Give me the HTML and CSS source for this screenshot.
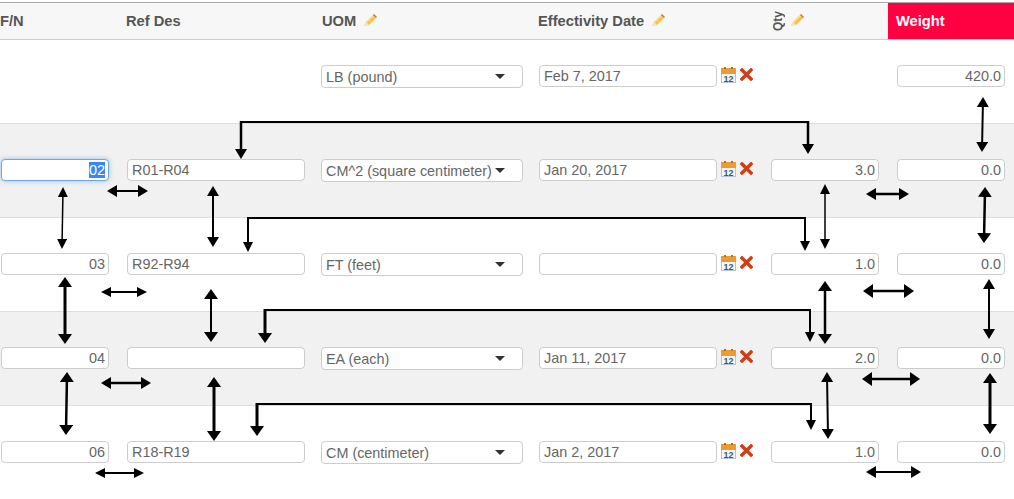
FILE: index.html
```html
<!DOCTYPE html>
<html lang="en">
<head>
    <meta charset="UTF-8">
    <title>Parts list</title>
    <link rel="stylesheet" href="styles.css">
</head>
<body>

    <svg width="0" height="0" class="defs">
        <defs>
            <g id="pencil">
                <path d="M1 12 L3 8 L10 1 L13 4 L6 11 Z" fill="#f5c242"/>
                <path d="M3 8 L10 1 L11 2 L4 9 Z" fill="#fbe08a"/>
                <path d="M10 1 L11 0 L14 3 L13 4 Z" fill="#c9702c"/>
                <path d="M1 12 L3 8 L6 11 Z" fill="#f6e6c4"/>
            </g>
            <g id="calendar">
                <rect x="0.5" y="2.5" width="14" height="13" fill="#f4f6f8" stroke="#b9c4ce"/>
                <rect x="0" y="1" width="15" height="6" fill="#ee9a2e"/>
                <rect x="3" y="0" width="2" height="2" fill="#a9712c"/>
                <rect x="10" y="0" width="2" height="2" fill="#a9712c"/>
                <text x="7.5" y="14.5" text-anchor="middle" class="cal-day">12</text>
            </g>
            <g id="cross">
                <path d="M2 2 L11 11 M11 2 L2 11" stroke="#cf3f17" stroke-width="3.4" stroke-linecap="square"/>
            </g>
            <marker id="head10" viewBox="0 0 10 10" refX="7" refY="5" markerWidth="10" markerHeight="10" markerUnits="userSpaceOnUse" orient="auto-start-reverse">
                <path d="M0 0 L10 5 L0 10 Z"/>
            </marker>
            <marker id="head12" viewBox="0 0 10 12" refX="7" refY="6" markerWidth="10" markerHeight="12" markerUnits="userSpaceOnUse" orient="auto-start-reverse">
                <path d="M0 0 L10 6 L0 12 Z"/>
            </marker>
            <marker id="head14" viewBox="0 0 10 14" refX="7" refY="7" markerWidth="10" markerHeight="14" markerUnits="userSpaceOnUse" orient="auto-start-reverse">
                <path d="M0 0 L10 7 L0 14 Z"/>
            </marker>
        </defs>
    </svg>

    <div class="head">
        <div class="head-cell first">F/N</div>
        <div class="head-cell ref">Ref Des</div>
        <div class="head-cell uom">UOM <svg class="pencil" width="14" height="13"><use href="#pencil"/></svg></div>
        <div class="head-cell eff">Effectivity Date <svg class="pencil" width="14" height="13"><use href="#pencil"/></svg></div>
        <div class="head-cell"><span class="qty">Qty</span> <svg class="pencil" width="14" height="13"><use href="#pencil"/></svg></div>
        <div class="head-cell weight">Weight</div>
    </div>

    <!-- first row has no F/N or Ref Des -->
    <div class="row top-row">
        <div></div>
        <div></div>
        <div class="select-wrap"><select class="field pick"><option>LB (pound)</option></select></div>
        <div class="date-cell">
            <input class="field date" value="Feb 7, 2017">
            <svg class="cal" width="15" height="16"><use href="#calendar"/></svg>
            <svg class="del" width="13" height="13"><use href="#cross"/></svg>
        </div>
        <div></div>
        <div><input class="field num" value="420.0"></div>
    </div>

    <div class="row alt">
        <div><div class="field num focused"><span class="sel">02</span></div></div>
        <div><input class="field date" value="R01-R04"></div>
        <div class="select-wrap"><select class="field pick"><option>CM^2 (square centimeter)</option></select></div>
        <div class="date-cell">
            <input class="field date" value="Jan 20, 2017">
            <svg class="cal" width="15" height="16"><use href="#calendar"/></svg>
            <svg class="del" width="13" height="13"><use href="#cross"/></svg>
        </div>
        <div><input class="field num" value="3.0"></div>
        <div><input class="field num" value="0.0"></div>
    </div>

    <div class="row">
        <div><input class="field num" value="03"></div>
        <div><input class="field date" value="R92-R94"></div>
        <div class="select-wrap"><select class="field pick"><option>FT (feet)</option></select></div>
        <div class="date-cell">
            <input class="field date" value="">
            <svg class="cal" width="15" height="16"><use href="#calendar"/></svg>
            <svg class="del" width="13" height="13"><use href="#cross"/></svg>
        </div>
        <div><input class="field num" value="1.0"></div>
        <div><input class="field num" value="0.0"></div>
    </div>

    <div class="row alt">
        <div><input class="field num" value="04"></div>
        <div><input class="field date" value=""></div>
        <div class="select-wrap"><select class="field pick"><option>EA (each)</option></select></div>
        <div class="date-cell">
            <input class="field date" value="Jan 11, 2017">
            <svg class="cal" width="15" height="16"><use href="#calendar"/></svg>
            <svg class="del" width="13" height="13"><use href="#cross"/></svg>
        </div>
        <div><input class="field num" value="2.0"></div>
        <div><input class="field num" value="0.0"></div>
    </div>

    <div class="row last">
        <div><input class="field num" value="06"></div>
        <div><input class="field date" value="R18-R19"></div>
        <div class="select-wrap"><select class="field pick"><option>CM (centimeter)</option></select></div>
        <div class="date-cell">
            <input class="field date" value="Jan 2, 2017">
            <svg class="cal" width="15" height="16"><use href="#calendar"/></svg>
            <svg class="del" width="13" height="13"><use href="#cross"/></svg>
        </div>
        <div><input class="field num" value="1.0"></div>
        <div><input class="field num" value="0.0"></div>
    </div>

    <!-- hand drawn arrows lying over the table -->
    <svg class="arrows" width="1014" height="499">
        <!-- elbows -->
        <path class="w2" d="M241 122 L808 122"/>
        <path class="w25" d="M241 121 L241 156" marker-end="url(#head12)"/>
        <path class="w25" d="M808 121 L808 151" marker-end="url(#head12)"/>

        <path class="w2" d="M247 218 L806 218"/>
        <path class="w2" d="M248 217 L248 249" marker-end="url(#head10)"/>
        <path class="w2" d="M805 217 L805 248" marker-end="url(#head10)"/>

        <path class="w2" d="M264 310 L811 310"/>
        <path class="w3" d="M265 309 L265 340" marker-end="url(#head14)"/>
        <path class="w2" d="M810 309 L810 339" marker-end="url(#head10)"/>

        <path class="w2" d="M256 404 L812 404"/>
        <path class="w3" d="M257 403 L257 433" marker-end="url(#head14)"/>
        <path class="w2" d="M811 403 L811 427" marker-end="url(#head10)"/>

        <!-- F/N and Ref Des column -->
        <path class="w15" d="M63 190 L62 246" marker-start="url(#head10)" marker-end="url(#head10)"/>
        <path class="w2" d="M213 189 L213 244" marker-start="url(#head12)" marker-end="url(#head12)"/>
        <path class="w3" d="M65 280 L65 341" marker-start="url(#head14)" marker-end="url(#head14)"/>
        <path class="w2" d="M211 292 L211 339" marker-start="url(#head14)" marker-end="url(#head14)"/>
        <path class="w25" d="M67 375 L66 432" marker-start="url(#head14)" marker-end="url(#head14)"/>
        <path class="w3" d="M214 380 L214 438" marker-start="url(#head14)" marker-end="url(#head14)"/>

        <path class="w2" d="M110 191 L145 191" marker-start="url(#head12)" marker-end="url(#head12)"/>
        <path class="w2" d="M104 292 L144 292" marker-start="url(#head10)" marker-end="url(#head10)"/>
        <path class="w25" d="M104 383 L148 383" marker-start="url(#head12)" marker-end="url(#head12)"/>
        <path class="w2" d="M98 473 L141 473" marker-start="url(#head10)" marker-end="url(#head10)"/>

        <!-- Qty and Weight column -->
        <path class="w15" d="M825 187 L825 246" marker-start="url(#head10)" marker-end="url(#head10)"/>
        <path class="w25" d="M825 284 L825 341" marker-start="url(#head14)" marker-end="url(#head14)"/>
        <path class="w2" d="M827 375 L828 436" marker-start="url(#head12)" marker-end="url(#head12)"/>
        <path class="w2" d="M983 100 L982 149" marker-start="url(#head12)" marker-end="url(#head12)"/>
        <path class="w25" d="M985 190 L984 240" marker-start="url(#head14)" marker-end="url(#head14)"/>
        <path class="w2" d="M989 282 L989 336" marker-start="url(#head12)" marker-end="url(#head12)"/>
        <path class="w3" d="M990 376 L990 431" marker-start="url(#head14)" marker-end="url(#head14)"/>

        <path class="w25" d="M869 194 L906 194" marker-start="url(#head12)" marker-end="url(#head12)"/>
        <path class="w25" d="M866 291 L911 291" marker-start="url(#head14)" marker-end="url(#head14)"/>
        <path class="w25" d="M865 379 L917 379" marker-start="url(#head14)" marker-end="url(#head14)"/>
        <path class="w2" d="M869 472 L918 472" marker-start="url(#head12)" marker-end="url(#head12)"/>
    </svg>

</body>
</html>
```

FILE: styles.css
```css
* {
    box-sizing: border-box;
}

body {
    margin: 0;
    padding-top: 2px;
    width: 1014px;
    height: 499px;
    overflow: hidden;
    position: relative;
    background-color: #fff;
    font-family: "Liberation Sans", Arial, sans-serif;
    font-size: 14px;
    color: #555;
}

.defs {
    display: block;
    height: 0;
}

.head {
    display: grid;
    grid-template-columns: 126px 194px 218px 232px 117px 127px;
    height: 38px;
    padding-left: 1px;
    align-items: stretch;
    background-color: #f7f7f7;
    border-top: 1px solid #aaa;
    border-bottom: 1px solid #ccc;
}

.head-cell {
    display: flex;
    align-items: center;
    gap: 6px;
    font-size: 14.7px;
    font-weight: bold;
    white-space: nowrap;
}

.head-cell.first {
    margin-left: -1px;
}

.head-cell.ref {
    margin-left: -1px;
}

.head-cell.uom {
    margin-left: 1px;
}

.head-cell.eff {
    margin-left: -1px;
}

.head-cell .pencil {
    margin-left: 1px;
    margin-top: -2px;
}

.qty {
    display: inline-block;
    margin-right: -2px;
    font-size: 12px;
    writing-mode: vertical-rl;
    transform: rotate(180deg);
}

.weight {
    padding-left: 8px;
    background-color: #ff0040;
    color: #fff;
}

.row {
    display: grid;
    grid-template-columns: 126px 194px 218px 232px 126px 117px;
    padding: 35px 0 36px 1px;
    border-bottom: 1px solid #ddd;
}

.row.top-row {
    padding-top: 25px;
}

.row.alt {
    background-color: #f1f1f1;
}

.row.last {
    padding-bottom: 35px;
    border-bottom: none;
}

.field {
    display: block;
    width: 108px;
    height: 22px;
    padding: 0 4px;
    background-color: #fff;
    border: 1px solid #ccc;
    border-radius: 4px;
    font-family: inherit;
    font-size: 14.4px;
    color: #666;
    outline: none;
}

.field.num {
    text-align: right;
    padding-right: 3px;
}

.field.date {
    width: 178px;
}

.field.focused {
    line-height: 20px;
    border-color: #6fa8dc;
    box-shadow: 0 0 5px rgba(102, 175, 233, 0.7);
}

.sel {
    background-color: #3b86f0;
    color: #fff;
}

.select-wrap {
    position: relative;
    height: 22px;
}

.pick {
    width: 202px;
    height: 23px;
    appearance: none;
    -webkit-appearance: none;
}

/* caret of the select */
.select-wrap::after {
    content: "";
    position: absolute;
    left: 174px;
    top: 9px;
    border-left: 5px solid transparent;
    border-right: 5px solid transparent;
    border-top: 5px solid #333;
}

.date-cell {
    display: flex;
    align-items: flex-start;
}

.cal {
    flex: none;
    margin: 2px 0 0 4px;
}

.del {
    flex: none;
    margin: 3px 0 0 4px;
}

.cal-day {
    font-family: "Liberation Sans", Arial, sans-serif;
    font-size: 9px;
    font-weight: bold;
    fill: #3f5872;
}

.arrows {
    position: absolute;
    top: 0;
    left: 0;
    pointer-events: none;
}

.arrows path {
    fill: none;
    stroke: #000;
    stroke-linejoin: miter;
}

marker path {
    fill: #000;
}

.w15 {
    stroke-width: 1.5;
}

.w2 {
    stroke-width: 2;
}

.w25 {
    stroke-width: 2.5;
}

.w3 {
    stroke-width: 3;
}
```
